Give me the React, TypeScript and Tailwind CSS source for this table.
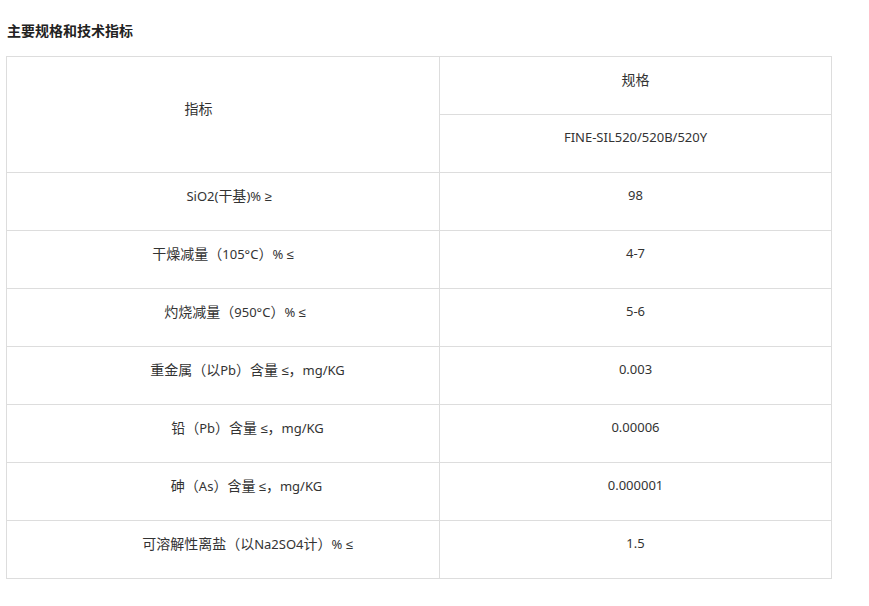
import React from "react";

const rows: { a: string; b: string; pad: string }[] = [
  { a: "SiO2(干基)% ≥", b: "98", pad: "pl-[12px]" },
  { a: "干燥减量（105°C）% ≤", b: "4-7", pad: "" },
  { a: "灼烧减量（950°C）% ≤", b: "5-6", pad: "pl-[24px]" },
  { a: "重金属（以Pb）含量 ≤，mg/KG", b: "0.003", pad: "pl-[49px]" },
  { a: "铅（Pb）含量 ≤，mg/KG", b: "0.00006", pad: "pl-[49px]" },
  { a: "砷（As）含量 ≤，mg/KG", b: "0.000001", pad: "pl-[47px]" },
  { a: "可溶解性离盐（以Na2SO4计）% ≤", b: "1.5", pad: "pl-[49px]" },
];

function Mixed({ text }: { text: string }) {
  const parts = text.split(/([\u3000-\u9fff\uff00-\uffef]+)/);
  return (
    <>
      {parts.map((p, i) =>
        /[\u3000-\u9fff\uff00-\uffef]/.test(p) ? (
          <span key={i} className="text-[14px]">
            {p}
          </span>
        ) : (
          <React.Fragment key={i}>{p}</React.Fragment>
        )
      )}
    </>
  );
}

const cell = "border border-[#dddddd] text-center align-middle pb-[11px]";

export default function App() {
  return (
    <div
      className="w-[869px] h-[606px] bg-white text-[#333] pl-[6px] pt-[22px]"
      style={{ fontFamily: '"Noto Sans", "Liberation Sans", "Noto Sans CJK SC", sans-serif' }}
    >
      <h3 className="text-[14px] font-bold leading-[18px] pl-[1px] text-[#222] mb-[16px]">主要规格和技术指标</h3>
      <table className="border-collapse w-[826px] text-[13px] table-fixed">
        <colgroup>
          <col className="w-[433px]" />
          <col />
        </colgroup>
        <tbody>
          <tr className="h-[58px]">
            <td rowSpan={2} className={`${cell} pr-[49px]`}>
              <Mixed text="指标" />
            </td>
            <td className={cell}>
              <Mixed text="规格" />
            </td>
          </tr>
          <tr className="h-[58px]">
            <td className={cell}>FINE-SIL520/520B/520Y</td>
          </tr>
          {rows.map((r) => (
            <tr key={r.a} className="h-[58px]">
              <td className={`${cell} ${r.pad}`}>
                <Mixed text={r.a} />
              </td>
              <td className={cell}>{r.b}</td>
            </tr>
          ))}
        </tbody>
      </table>
    </div>
  );
}
